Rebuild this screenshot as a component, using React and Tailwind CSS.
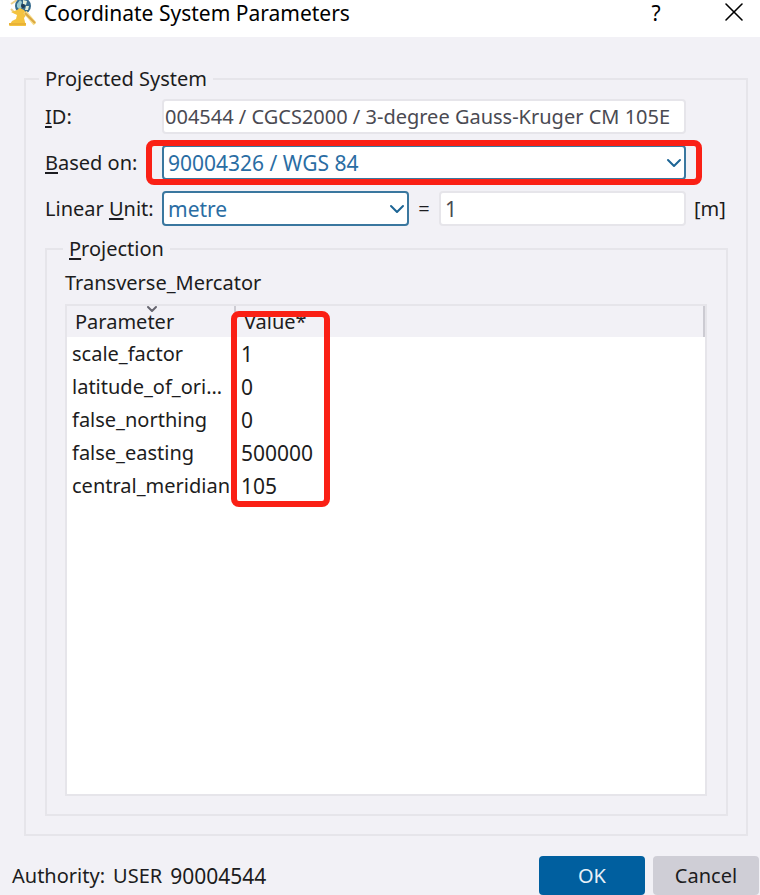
import { useState } from "react";
import { ChevronDown, X } from "lucide-react";

const parameters = [
  { name: "scale_factor", value: "1" },
  { name: "latitude_of_origin", value: "0" },
  { name: "false_northing", value: "0" },
  { name: "false_easting", value: "500000" },
  { name: "central_meridian", value: "105" },
];

function AppIcon() {
  return (
    <svg className="h-[26px] w-[28px] shrink-0" viewBox="0 0 28 26" aria-hidden="true">
      <path d="M3 4l6-4M3 9l4 4" stroke="#ecd08a" strokeWidth="2" />
      <circle cx="15" cy="6" r="8" fill="#346a8c" />
      <path d="M9 4l3-4 2 2-1 3 1 2-2 3-3-3z" fill="#9ccbd0" />
      <path d="M15 0l4 1-1 4-3-1zM18 6l3 0-1 4-3 0z" fill="#e3eed8" />
      <circle cx="15" cy="6" r="2" fill="#1f3b52" />
      <path d="M3 12l6-2 3-2 4 2 3 4-3 4 2 8H1l3-5 4-2 1-4z" fill="#f4c33f" />
      <path d="M17 12l10 12" stroke="#f8dc87" strokeWidth="4" />
      <path d="M17 13l10 10" stroke="#d9a742" strokeWidth="2" />
      <path d="M1 24h17" stroke="#e9b237" strokeWidth="2" />
    </svg>
  );
}

function Dropdown({ id, value, options, onChange }) {
  return (
    <div className="relative">
      <select
        id={id}
        value={value}
        onChange={(e) => onChange(e.target.value)}
        className="block h-[35px] w-full appearance-none rounded-[4px] border-2 border-[#3a779f] bg-white pl-1 pr-8 text-[21px] text-[#2a6da3] outline-none"
      >
        {options.map((o) => (
          <option key={o}>{o}</option>
        ))}
      </select>
      <ChevronDown
        className="pointer-events-none absolute right-0 top-1.5 h-6 w-6 text-[#1d6595]"
        strokeWidth={2}
      />
    </div>
  );
}

export default function App() {
  const [crs, setCrs] = useState("90004326 / WGS 84");
  const [unit, setUnit] = useState("metre");
  const [factor, setFactor] = useState("1");

  return (
    <div className="flex min-h-screen flex-col bg-[#f2f1f6] font-['Noto_Sans','Open_Sans',sans-serif] text-[20px] leading-7 text-[#1c1c20]">
      {/* Title bar */}
      <header className="flex h-[37px] items-start bg-white pl-2 pr-4 text-[21px] text-black">
        <AppIcon />
        <h1 className="ml-2 flex-1 leading-[26px]">Coordinate System Parameters</h1>
        <button type="button" aria-label="Help" className="mr-[54px] w-5 leading-[26px]">
          ?
        </button>
        <button type="button" aria-label="Close" className="-mr-1 flex h-6 w-7 items-center justify-center">
          <X className="h-8 w-8 shrink-0" strokeWidth={1.2} />
        </button>
      </header>

      <main className="flex flex-1 flex-col pl-6 pr-3 pt-7">
        <fieldset className="min-w-0 flex-1 border-2 border-[#e6e5ea] pb-[18px] pl-[19px] pr-[18px]">
          <legend className="-ml-1.5 px-1.5">Projected System</legend>

          <div className="mt-1.5 grid grid-cols-[117px_minmax(0,1fr)_42px] items-center gap-y-[11px]">
            <label htmlFor="crs-id">
              <u className="underline-offset-2">I</u>D:
            </label>
            <input
              id="crs-id"
              readOnly
              value="004544 / CGCS2000 / 3-degree Gauss-Kruger CM 105E"
              className="h-[35px] w-full rounded-[4px] border-2 border-[#e6e5ea] bg-white pl-px text-[#4a4a52] outline-none"
            />
            <span />

            <label htmlFor="based-on">
              <u className="underline-offset-2">B</u>ased on:
            </label>
            <div className="relative">
              <Dropdown id="based-on" value={crs} options={["90004326 / WGS 84"]} onChange={setCrs} />
              <div className="pointer-events-none absolute -inset-x-4 -inset-y-[5px] rounded-lg border-[6px] border-[#fa2015]" />
            </div>
            <span />

            <label htmlFor="linear-unit" className="whitespace-nowrap">
              Linear <u className="underline-offset-2">U</u>nit:
            </label>
            <div className="grid grid-cols-[minmax(0,1fr)_30px_minmax(0,1fr)] items-center">
              <Dropdown id="linear-unit" value={unit} options={["metre", "foot"]} onChange={setUnit} />
              <span className="text-center">=</span>
              <input
                aria-label="Unit factor"
                value={factor}
                onChange={(e) => setFactor(e.target.value)}
                className="h-[35px] w-full rounded-[4px] border-2 border-[#e6e5ea] bg-white pl-1 text-[21px] text-[#4a4a52] outline-none"
              />
            </div>
            <span className="pl-2">[m]</span>
          </div>

          {/* Projection group */}
          <fieldset className="mt-[9px] min-w-0 border-2 border-[#e6e5ea] pb-[18px] pl-[18px] pr-[19px]">
            <legend className="-ml-0.5 px-1.5">
              <u className="underline-offset-2">P</u>rojection
            </legend>
            <p className="mt-1.5">Transverse_Mercator</p>

            <div className="relative mt-[7px] min-h-[492px] border-2 border-[#e6e5ea] bg-white">
              <table className="w-full table-fixed border-collapse text-left">
                <thead>
                  <tr className="h-[31px] bg-[#f2f1f6]">
                    <th className="relative w-[168px] p-0 pl-2 font-normal leading-[31px]">
                      Parameter
                      <ChevronDown className="absolute left-[77px] top-[-5px] h-4 w-4 text-[#66656f]" strokeWidth={3} />
                    </th>
                    <th className="border-x-2 border-[#cccbd2] p-0 pl-2 font-normal leading-[31px]">Value*</th>
                  </tr>
                </thead>
                <tbody>
                  {parameters.map((p) => (
                    <tr key={p.name} className="h-[33px]">
                      <td className="truncate p-0 pl-[5px] pr-[3px]">{p.name}</td>
                      <td className="p-0 pl-1.5 text-[21px]">{p.value}</td>
                    </tr>
                  ))}
                </tbody>
              </table>
              <div className="pointer-events-none absolute left-[164px] top-[5px] h-[196px] w-[99px] rounded-lg border-[6px] border-[#fa2015]" />
            </div>
          </fieldset>
        </fieldset>
      </main>

      <footer className="mt-5 flex h-[39px] items-center gap-2 pl-3 pr-px">
        <p className="flex flex-1 gap-2">
          <span>Authority:</span>
          <span>USER</span>
          <span className="text-[21px]">90004544</span>
        </p>
        <button type="button" className="h-full w-[106px] rounded-[4px] bg-[#005f9f] text-[#e8f1f8]">
          OK
        </button>
        <button type="button" className="h-full w-[106px] rounded-[4px] bg-[#cfced6]">
          Cancel
        </button>
      </footer>
    </div>
  );
}
